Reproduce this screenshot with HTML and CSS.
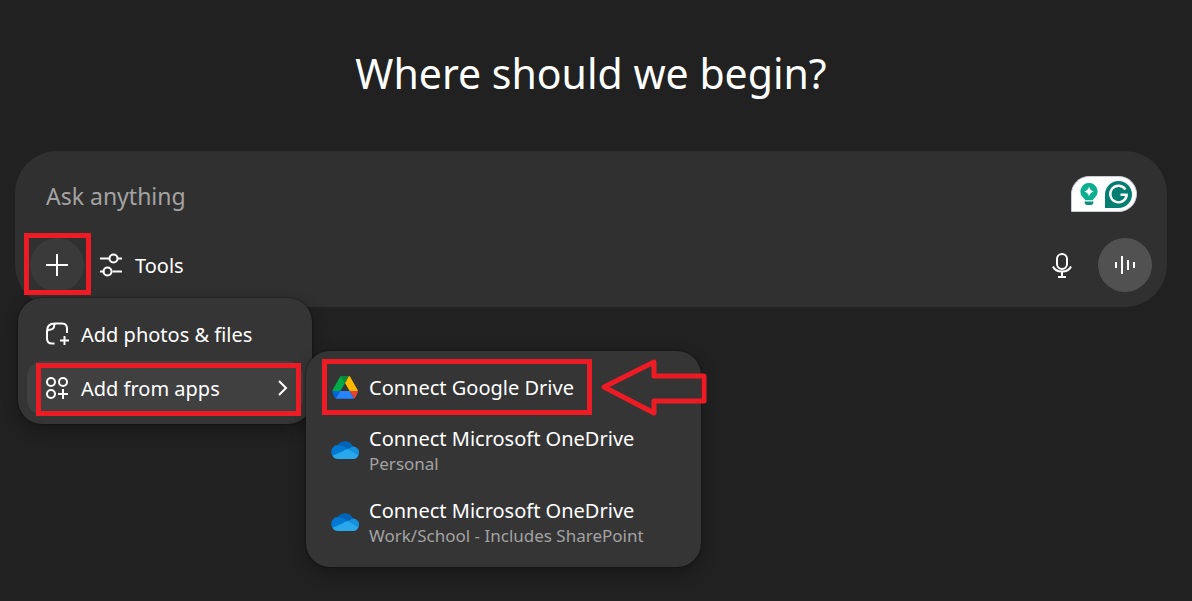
FILE: index.html
```html
<!DOCTYPE html>
<html lang="en">
  <head>
    <meta charset="UTF-8" />
    <meta name="viewport" content="width=device-width, initial-scale=1.0" />
    <title>Where should we begin?</title>
    <link rel="stylesheet" href="styles.css">
  </head>
  <body>
    <main class="page">
      <h1>Where should we begin?</h1>

      <form class="composer">
        <div class="prompt-row">
          <input class="prompt" type="text" placeholder="Ask anything" aria-label="Ask anything" />
          <div class="writing-badge">
            <svg width="20" height="24" viewBox="0 0 20 24">
              <path d="M10 1a8.5 8.5 0 0 0-5.500 15Q5.800 17 6.200 18.300h7.600Q14.200 17 15.500 16A8.500 8.500 0 0 0 10 1z" fill="#0bae8e" />
              <path d="M10 4.500q1 4.200 5 5-4 .8-5 5-1-4.200-5-5 4-.8 5-5z" fill="#fff" />
              <path d="M5.500 19.500h9c0 2-1 3.500-2.500 3.500H8c-1.500 0-2.500-1.500-2.500-3.500z" fill="#0a8f7a" />
            </svg>
            <svg width="27" height="27" viewBox="0 0 27 27">
              <path d="M13.500 0A13.500 13.500 0 1 1 13.500 27H0V13.500A13.500 13.500 0 0 1 13.500 0z" fill="#047e70" />
              <path d="M20.500 8.500A8.300 8.300 0 1 0 21.800 13.800M15.500 13.800h7.300M21.300 14l-.8 4" fill="none" stroke="#fff" stroke-width="2.400" />
            </svg>
          </div>
        </div>

        <div class="action-row">
          <div class="anchor">
            <button class="round-btn add" type="button" aria-label="Add">
              <svg width="24" height="24" viewBox="0 0 24 24" class="line">
                <path d="M12 1v22M1 12h22" />
              </svg>
            </button>
            <span class="mark mark-add"></span>

            <div class="menu">
              <button class="menu-item" type="button">
                <svg width="26" height="26" viewBox="0 0 26 26" class="line">
                  <path d="M9.500 22.500H7q-5 0-5-5V10q0-7.500 7.500-7.500H17q5 0 5 5V12M2 11q0-2 2.500-2.200Q9 8.500 9.200 4.500q0-2 2-2M19.500 15v9M15 19.500h9" />
                </svg>
                Add photos &amp; files
              </button>
              <div class="anchor">
                <button class="menu-item active" type="button">
                  <svg width="26" height="26" viewBox="0 0 26 26" class="line">
                    <circle cx="6" cy="7" r="4" />
                    <circle cx="18" cy="7" r="4" />
                    <circle cx="6" cy="19" r="4" />
                    <path d="M18 14v10M13 19h10" />
                  </svg>
                  Add from apps
                  <svg width="12" height="18" viewBox="0 0 12 18" class="line chevron">
                    <path d="M2 2l7 7-7 7" />
                  </svg>
                </button>
                <span class="mark mark-apps"></span>

                <div class="submenu">
                  <div class="anchor">
                    <button class="menu-item" type="button">
                      <svg width="28" height="28" viewBox="0 0 28 28">
                        <path d="M10 3h8l-4 7z" fill="#0a8a36" />
                        <path d="M10 3l4 7-4.700 8H1.500q0-1 .5-2L9 4q.5-1 1-1z" fill="#00ac47" />
                        <path d="M18 3q.8.200 1.300 1L26 16q.8 1 .8 2h-8.100L14 10z" fill="#ffba00" />
                        <path d="M1.500 18h7.800l-4.500 7.500q-.8-.4-1.300-1.200L2 21q-.5-1-.5-3z" fill="#0066da" />
                        <path d="M9.300 18h9.400l4.500 7.500q-.5.300-1.500.300H6.500q-1 0-1.700-.3z" fill="#2684fc" />
                        <path d="M18.700 18h8.100q0 1.500-.6 2.800l-1.800 3.500q-.4.800-1.200 1.200z" fill="#ea4335" />
                      </svg>
                      Connect Google Drive
                    </button>
                    <span class="mark mark-drive"></span>
                    <svg class="arrow" width="106" height="58" viewBox="0 0 106 58">
                      <path d="M3 29L53 4v14h50v25H53v12z" />
                    </svg>
                  </div>
                  <button class="menu-item tall" type="button">
                    <svg width="28" height="20" viewBox="0 0 28 20">
                      <path d="M6.500 6A8.500 8.500 0 0 1 22 6.800L16 12z" fill="#0364b8" />
                      <path d="M8 5a7 7 0 0 0-6.500 11L14 12l3-2.800L11 5.500Q9.500 5 8 5z" fill="#0078d4" />
                      <path d="M16.500 9.200L21.500 6.500a6 6 0 0 1 5.800 9L20 12z" fill="#1490df" />
                      <path d="M1.500 15.800L16.500 9l10.800 6.300A5 5 0 0 1 23 19H7q-3.800 0-5.500-3.200z" fill="#28a8ea" />
                    </svg>
                    <span class="label">Connect Microsoft OneDrive<small>Personal</small></span>
                  </button>
                  <button class="menu-item tall" type="button">
                    <svg width="28" height="20" viewBox="0 0 28 20">
                      <path d="M6.500 6A8.500 8.500 0 0 1 22 6.800L16 12z" fill="#0364b8" />
                      <path d="M8 5a7 7 0 0 0-6.500 11L14 12l3-2.800L11 5.500Q9.500 5 8 5z" fill="#0078d4" />
                      <path d="M16.500 9.200L21.500 6.500a6 6 0 0 1 5.800 9L20 12z" fill="#1490df" />
                      <path d="M1.500 15.800L16.500 9l10.800 6.300A5 5 0 0 1 23 19H7q-3.800 0-5.500-3.200z" fill="#28a8ea" />
                    </svg>
                    <span class="label">Connect Microsoft OneDrive<small>Work/School - Includes SharePoint</small></span>
                  </button>
                </div>
              </div>
            </div>
          </div>

          <button class="tools" type="button">
            <svg width="24" height="24" viewBox="0 0 24 24" class="line">
              <path d="M1 5.500h9.500M18.500 5.500H23M1 18.500h4.500M13.500 18.500H23" />
              <circle cx="14.500" cy="5.500" r="4" />
              <circle cx="8.500" cy="18.500" r="4" />
            </svg>
            Tools
          </button>

          <button class="round-btn mic" type="button" aria-label="Dictate">
            <svg width="24" height="28" viewBox="0 0 24 28" class="line">
              <rect x="7" y="3" width="10" height="15" rx="5" />
              <path d="M3 15.500a9.500 7.500 0 0 0 18 0M12 21v4.500M8 26h8" />
            </svg>
          </button>
          <button class="round-btn voice" type="button" aria-label="Voice mode">
            <svg width="24" height="24" viewBox="0 0 24 24" class="line">
              <path d="M3 9v6M9 3v18M15 7v10M21 9v6" />
            </svg>
          </button>
        </div>
      </form>
    </main>
  </body>
</html>
```
FILE: styles.css
```css
* {
  box-sizing: border-box;
}

body {
  margin: 0;
  background-color: #212121;
  color: #fff;
  font-family: "Noto Sans", "Segoe UI", sans-serif;
}

.page {
  min-height: 100vh;
  padding: 43px 25px 0 15px;
}

h1 {
  margin: 0 0 48px;
  font-size: 41px;
  line-height: 60px;
  font-weight: 400;
  text-align: center;
}

button {
  border: none;
  background: none;
  color: inherit;
  font: inherit;
  cursor: pointer;
}

svg {
  display: block;
  flex-shrink: 0;
}

.line {
  fill: none;
  stroke: #fff;
  stroke-width: 2;
}

.composer {
  display: flex;
  flex-direction: column;
  gap: 12px;
  padding: 15px;
  border-radius: 42px;
  background-color: #303030;
}

.prompt-row {
  display: flex;
  align-items: center;
  height: 60px;
  padding: 0 15px 0 16px;
}

.prompt {
  flex: 1;
  min-width: 0;
  padding: 0;
  border: none;
  outline: none;
  background: none;
  color: #fff;
  font: inherit;
  font-size: 23px;
}

.prompt::placeholder {
  color: #a3a3a3;
  opacity: 1;
}

.writing-badge {
  display: flex;
  align-items: center;
  gap: 6px;
  height: 36px;
  margin-bottom: 4px;
  padding: 0 4px 0 7px;
  border: 1px solid #c9cbd8;
  border-radius: 18px 18px 18px 0;
  background-color: #fff;
}

.action-row {
  display: flex;
  align-items: center;
}

.anchor {
  position: relative;
}

.round-btn {
  display: flex;
  align-items: center;
  justify-content: center;
  width: 54px;
  height: 54px;
  padding: 0;
  border-radius: 50%;
}

.add {
  background-color: #3a3a3a;
}

.tools {
  display: flex;
  align-items: center;
  gap: 12px;
  padding: 0 15px;
  font-size: 20px;
}

.mic {
  margin-left: auto;
}

.voice {
  margin-left: 9px;
  background-color: #515151;
}

.menu,
.submenu {
  position: absolute;
  z-index: 1;
  padding: 9px;
  border-radius: 24px;
  background-color: #353535;
  box-shadow: 0 6px 16px rgba(0, 0, 0, 0.3), 0 0 2px rgba(0, 0, 0, 0.6);
}

.menu {
  top: calc(100% + 6px);
  left: -12px;
  width: 294px;
}

.submenu {
  top: -10px;
  left: calc(100% + 3px);
  width: 395px;
}

.menu-item {
  display: flex;
  align-items: center;
  gap: 10px;
  width: 100%;
  height: 54px;
  padding: 0 14px 0 18px;
  border-radius: 16px;
  font-size: 20px;
  text-align: left;
  white-space: nowrap;
}

.active {
  background-color: #404040;
}

.chevron {
  margin-left: auto;
}

.submenu .menu-item {
  padding: 0 16px;
}

.submenu .tall {
  height: 72px;
}

.label {
  padding-top: 2px;
  line-height: 26px;
}

.label small {
  display: block;
  color: #a3a3a3;
  font-size: 17px;
  line-height: 24px;
}

/* red call-outs */
.mark {
  position: absolute;
  z-index: 2;
  border: 5px solid #ed1c24;
  pointer-events: none;
}

.mark-add {
  inset: -5px -7px -3px -6px;
}

.mark-apps {
  inset: 2px 2px -1px 9px;
}

.mark-drive {
  inset: -1px auto -1px 7px;
  width: 270px;
}

.arrow {
  position: absolute;
  top: -2px;
  left: 286px;
  fill: none;
  stroke: #ed1c24;
  stroke-width: 5;
  stroke-linejoin: round;
}
```
